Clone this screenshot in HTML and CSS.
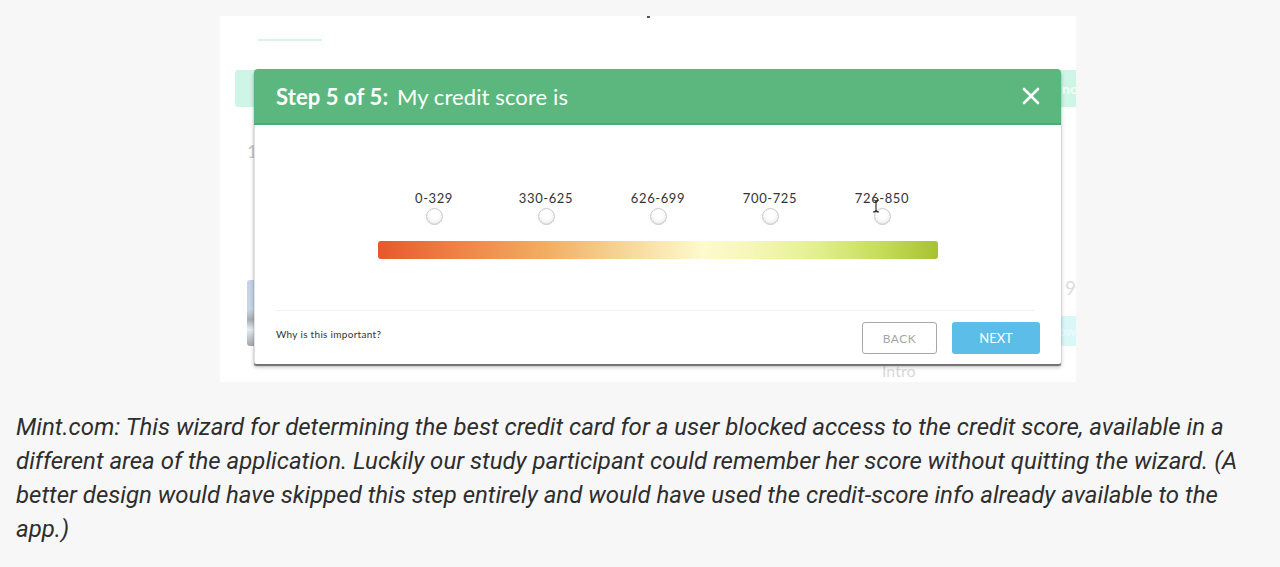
FILE: index.html
```html
<!DOCTYPE html>
<html>
<head>
<meta charset="utf-8">
<link rel="stylesheet" href="styles.css">
</head>
<body>
<figure class="figure">
  <div class="shot">
    <div class="bg-dash"></div>
    <div class="bg-underline"></div>
    <div class="bg-mintbar"><span class="bg-nc">nc</span></div>
    <div class="bg-one">1</div>
    <div class="bg-photo"></div>
    <div class="bg-nine">9</div>
    <div class="bg-ow">ow</div>
    <div class="bg-intro">Intro</div>

    <div class="modal">
      <div class="modal-head">
        <h2 class="modal-title"><b>Step 5 of 5:</b> My credit score is</h2>
        <svg class="close" width="18" height="18" viewBox="0 0 18 18"><path d="M2 2 L16 16 M16 2 L2 16" stroke="#fff" stroke-width="2.6" stroke-linecap="round"/></svg>
      </div>
      <div class="modal-body">
        <div class="scale">
          <div class="opts">
            <label class="opt"><span class="opt-label">0-329</span><span class="radio"></span></label>
            <label class="opt"><span class="opt-label">330-625</span><span class="radio"></span></label>
            <label class="opt"><span class="opt-label">626-699</span><span class="radio"></span></label>
            <label class="opt"><span class="opt-label">700-725</span><span class="radio"></span></label>
            <label class="opt"><span class="opt-label">726-850</span><span class="radio"></span></label>
          </div>
          <div class="bar"></div>
          <svg class="cursor" width="8" height="14" viewBox="0 0 8 14"><path d="M1 1 Q4 1 4 3 Q4 1 7 1 M4 3 V11 M1 13 Q4 13 4 11 Q4 13 7 13" stroke="#222" stroke-width="1.1" fill="none"/></svg>
        </div>
        <div class="divider"></div>
        <div class="modal-foot">
          <a class="why">Why is this important?</a>
          <div class="btns">
            <button class="btn btn-back">BACK</button>
            <button class="btn btn-next">NEXT</button>
          </div>
        </div>
      </div>
    </div>
  </div>
  <figcaption class="caption">Mint.com: This wizard for determining the best credit card for a user blocked access to the credit score, available in a different area of the application. Luckily our study participant could remember her score without quitting the wizard. (A better design would have skipped this step entirely and would have used the credit-score info already available to the app.)</figcaption>
</figure>
</body>
</html>
```

FILE: styles.css
```css
html, body {
  margin: 0;
  padding: 0;
  background: #f7f7f7;
}
.figure {
  margin: 0;
  padding: 16px 0 0 0;
}
.shot {
  position: relative;
  margin-left: 220px;
  width: 856px;
  height: 366px;
  background: #ffffff;
  overflow: hidden;
  font-family: Lato, "Open Sans", sans-serif;
}
.bg-dash {
  position: absolute;
  left: 427px;
  top: 0;
  width: 3px;
  height: 2px;
  background: #555;
}
.bg-underline {
  position: absolute;
  left: 38px;
  top: 23px;
  width: 64px;
  height: 2px;
  background: #d6f3ee;
}
.bg-mintbar {
  position: absolute;
  left: 15px;
  top: 54px;
  width: 841px;
  height: 37px;
  background: #cdf6e6;
  border-radius: 3px 0 0 3px;
}
.bg-nc {
  position: absolute;
  left: 827px;
  top: 10px;
  font-size: 14px;
  font-weight: 700;
  color: #f3fffa;
}
.bg-one {
  position: absolute;
  left: 27px;
  top: 124px;
  font-size: 18px;
  color: #c8c8c8;
}
.bg-photo {
  position: absolute;
  left: 27px;
  top: 264px;
  width: 10px;
  height: 66px;
  border-radius: 3px 0 0 3px;
  background: linear-gradient(#c3d3ea, #c9d6e4 45%, #a9aeb4 60%, #e4eef4 75%, #a3a6aa);
}
.bg-nine {
  position: absolute;
  left: 845px;
  top: 260px;
  font-size: 19px;
  color: #dddddd;
}
.bg-ow {
  position: absolute;
  left: 838px;
  top: 300px;
  width: 18px;
  height: 30px;
  background: #d9f7f7;
  color: #ecfcfc;
  font-size: 13px;
  line-height: 30px;
  text-align: right;
  overflow: hidden;
}
.bg-intro {
  position: absolute;
  left: 662px;
  top: 345px;
  font-size: 16px;
  color: #d9d9d9;
}

.modal {
  position: absolute;
  left: 34px;
  top: 53px;
  width: 807px;
  background: #ffffff;
  border-radius: 4px 4px 2px 2px;
  box-shadow: 0 2px 1px #6f6f6f, 0 3px 4px rgba(0,0,0,0.25);
  border-left: 1px solid #e2e2e2;
  box-sizing: border-box;
}
.modal-head {
  height: 56px;
  background: #5bb77d;
  border-bottom: 2px solid #4faa72;
  border-radius: 4px 4px 0 0;
  box-sizing: border-box;
  display: flex;
  align-items: center;
  justify-content: space-between;
  padding: 0 21px 0 22px;
  margin-left: -1px;
}
.modal-title {
  margin: 0;
  font-family: Lato, sans-serif;
  font-weight: 400;
  font-size: 22px;
  color: #ffffff;
  letter-spacing: 0.1px;
}
.modal-title b {
  font-weight: 700;
  margin-right: 3px;
}
.close {
  display: block;
}
.modal-body {
  padding-top: 66px;
}
.scale {
  position: relative;
  width: 560px;
  margin: 0 auto;
}
.opts {
  display: grid;
  grid-template-columns: repeat(5, 1fr);
}
.opt {
  display: flex;
  flex-direction: column;
  align-items: center;
}
.opt-label {
  font-family: Lato, sans-serif;
  font-size: 13px;
  line-height: 14px;
  color: #333333;
  letter-spacing: 0.6px;
}
.radio {
  margin-top: 3px;
  width: 17px;
  height: 17px;
  border-radius: 50%;
  box-sizing: border-box;
  border: 1px solid #c9c9c9;
  background: radial-gradient(circle at 50% 35%, #ffffff 30%, #e9e9e9 100%);
  box-shadow: inset 0 -1px 1px rgba(0,0,0,0.06);
}
.bar {
  margin-top: 16px;
  height: 18px;
  border-radius: 3px;
  background: linear-gradient(90deg, #e8572d 0%, #ee7c43 12%, #f1ae63 30%, #f7d99d 45%, #fefacc 58%, #f7f7bb 66%, #e3f091 78%, #c5dc58 90%, #a6c230 100%);
}
.cursor {
  position: absolute;
  left: 494px;
  top: 8px;
}
.divider {
  margin: 51px 26px 0 21px;
  height: 1px;
  background: #f1f1f1;
}
.modal-foot {
  display: flex;
  align-items: flex-start;
  justify-content: space-between;
  padding: 11px 21px 10px 21px;
}
.why {
  margin-top: 6px;
  font-family: Lato, sans-serif;
  font-size: 10px;
  line-height: 12px;
  color: #333333;
  letter-spacing: 0.3px;
}
.btns {
  display: flex;
  gap: 15px;
}
.btn {
  height: 32px;
  border-radius: 3px;
  font-family: Lato, sans-serif;
  font-size: 12px;
  box-sizing: border-box;
  cursor: pointer;
}
.btn-back {
  width: 75px;
  background: #ffffff;
  border: 1px solid #a8a8a8;
  color: #a6a6a6;
  letter-spacing: 0.5px;
}
.btn-next {
  width: 88px;
  background: #5bbde8;
  border: none;
  color: #ffffff;
  font-size: 13px;
}

.caption {
  margin: 28px 0 0 0;
  padding: 0 16px;
  width: 1248px;
  font-family: Roboto, "Open Sans", sans-serif;
  font-style: italic;
  font-size: 24px;
  line-height: 34px;
  color: #2e2e2e;
  letter-spacing: 0;
}
```
